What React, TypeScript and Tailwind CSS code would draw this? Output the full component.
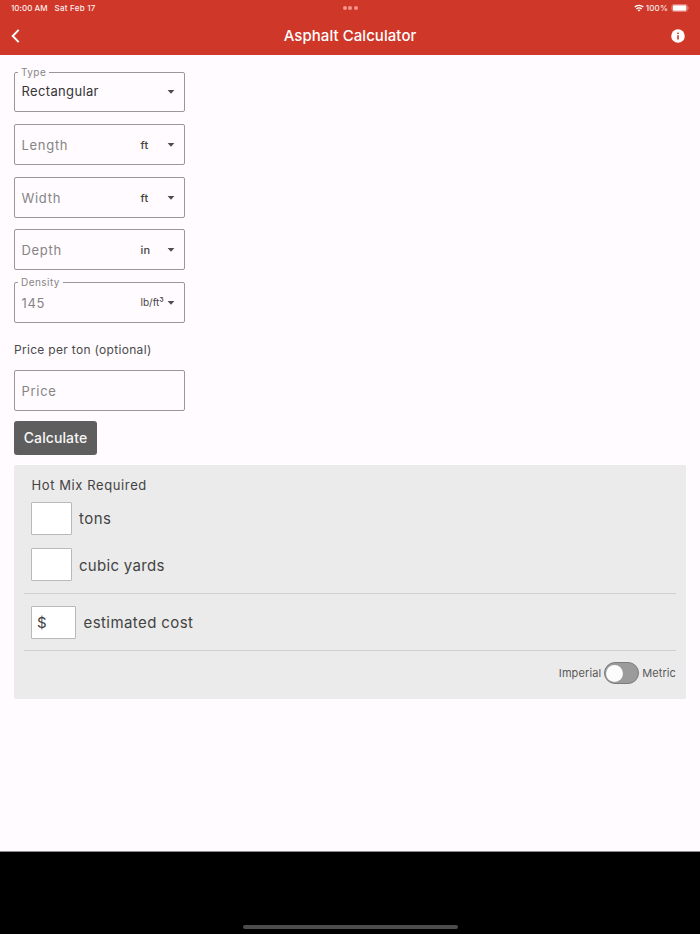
import { useState } from 'react';

type FieldProps = {
  label?: string;
  value: string;
  valueClass?: string;
  unit?: string;
  unitClass?: string;
  hasMenu?: boolean;
  className?: string;
};

function Caret() {
  return (
    <svg width="8" height="4" viewBox="0 0 8 4" className="shrink-0">
      <path d="M0.6 0h6.8L4 3.8z" fill="#4d4d4f" />
    </svg>
  );
}

function Field({
  label,
  value,
  valueClass = 'text-[#858585] tracking-[0.7px]',
  unit,
  unitClass = 'pt-px text-[11px] font-medium tracking-[0.2px]',
  hasMenu = true,
  className = 'h-[41px]',
}: FieldProps) {
  return (
    <div
      className={`relative flex w-[171px] items-center rounded-[2px] border border-[#989898] pl-[6.5px] pr-[9px] ${className}`}
    >
      {label && (
        <span className="absolute -top-[7px] left-[3px] bg-[#fffbff] px-[3px] text-[10px] leading-[12px] tracking-[0.45px] text-[#858585]">
          {label}
        </span>
      )}
      <span className={`flex-1 text-[13px] leading-4 ${valueClass}`}>{value}</span>
      {unit && <span className={`w-[26.5px] whitespace-nowrap text-[#444444] ${unitClass}`}>{unit}</span>}
      {hasMenu && <Caret />}
    </div>
  );
}

function StatusBar() {
  return (
    <div className="grid h-[17px] grid-cols-3 items-center px-[11px] text-[8px] font-medium leading-none text-[#fdeeec]">
      <div className="flex gap-[7px] pb-px">
        <span className="tracking-[0.02px]">10:00 AM</span>
        <span className="tracking-[0.25px]">Sat Feb 17</span>
      </div>
      <div className="flex justify-center gap-[1.5px] pb-px">
        <i className="size-[4px] rounded-full bg-[#f5958b]" />
        <i className="size-[4px] rounded-full bg-[#f5958b]" />
        <i className="size-[4px] rounded-full bg-[#f5958b]" />
      </div>
      <div className="flex items-center justify-end pb-px">
        <svg width="10" height="8" viewBox="0 0 10 8" fill="none" stroke="#fff" strokeWidth="1.4">
          <path d="M0.7 3.1a6.1 6.1 0 0 1 8.6 0" />
          <path d="M2.4 5a3.7 3.7 0 0 1 5.2 0" />
          <path d="M5 7.6L3.6 6.2a2 2 0 0 1 2.8 0z" fill="#fff" stroke="none" />
        </svg>
        <span className="ml-[2px] tracking-[0.15px]">100%</span>
        <svg width="18" height="8" viewBox="0 0 18 8" className="ml-[3px]">
          <rect x="0.9" y="0.4" width="15.4" height="7.2" rx="2.2" fill="none" stroke="#ec948c" strokeWidth="0.8" />
          <rect x="1.8" y="1.3" width="13.6" height="5.4" rx="1.3" fill="#fff" />
          <path d="M17 2.8v2.4c.9-.3.9-2.1 0-2.4z" fill="#ec948c" />
        </svg>
      </div>
    </div>
  );
}

function Header() {
  return (
    <header className="h-[55px] bg-[#cf3729]">
      <StatusBar />
      <div className="grid h-[38px] grid-cols-3 items-center px-[11px] text-white">
        <svg width="9" height="14" viewBox="0 0 9 14" fill="none" stroke="#fff" strokeWidth="2">
          <path d="M7.7 0.9L1.7 7l6 6.1" />
        </svg>
        <h1 className="whitespace-nowrap text-center text-[15px] font-medium leading-5 tracking-[0.06px]">
          Asphalt Calculator
        </h1>
        <svg width="14" height="14" viewBox="0 0 14 14" className="mr-[4px] justify-self-end">
          <circle cx="7" cy="7" r="6.8" fill="#fff" />
          <path d="M6.2 3.4h1.6V5H6.2zM6.2 6.2h1.6v4.4H6.2z" fill="#cf3729" />
        </svg>
      </div>
    </header>
  );
}

function Results() {
  const [metric, setMetric] = useState(false);

  return (
    <section className="mt-[10px] h-[234px] w-[672px] rounded-[2px] bg-[#ebebeb] px-[10px] pt-[11px] text-[#434343]">
      <h2 className="pl-[7.5px] text-[13px] leading-[18px] tracking-[0.6px]">Hot Mix Required</h2>
      <div className="mt-[8px] flex h-[33px] items-center pl-[7px]">
        <div className="h-[33px] w-[41px] rounded-[1px] border border-[#b9b9b9] bg-white" />
        <span className="ml-[7px] pt-[2px] text-[15px] tracking-[0.5px]">tons</span>
      </div>
      <div className="mt-[13px] flex h-[33px] items-center pl-[7px]">
        <div className="h-[33px] w-[41px] rounded-[1px] border border-[#b9b9b9] bg-white" />
        <span className="ml-[7px] pt-[3px] text-[15px] tracking-[0.3px]">cubic yards</span>
      </div>
      <div className="mt-[12px] flex h-[58px] items-center border-y border-[#d0d0d0] pl-[7px]">
        <div className="flex h-[33px] w-[45px] items-center rounded-[1px] border border-[#b9b9b9] bg-white pl-[5px] pt-[2px] text-[15px]">
          $
        </div>
        <span className="ml-[7.5px] pt-[2px] text-[15px] tracking-[0.42px]">estimated cost</span>
      </div>
      <div className="mt-[11px] flex h-[22px] items-center justify-end text-[11px] text-[#595959]">
        <span className="tracking-[0.1px]">Imperial</span>
        <button
          type="button"
          onClick={() => setMetric(!metric)}
          className={`ml-[3px] mr-[3px] flex h-[22px] w-[35px] items-center rounded-full border border-[#7b7b7b] bg-[#9b9b9b] px-[1px] ${metric ? 'justify-end' : ''}`}
        >
          <i className="size-[17px] rounded-full bg-[#fcfcfc]" />
        </button>
        <span className="tracking-[0.1px]">Metric</span>
      </div>
    </section>
  );
}

export default function App() {
  return (
    <div className="flex h-[934px] w-[700px] flex-col overflow-hidden bg-[#fffbff] font-['Inter',sans-serif]">
      <Header />
      <main className="flex-1 px-[14px] pt-[17px]">
        <Field label="Type" value="Rectangular" valueClass="pb-[2px] text-[#353535] tracking-[0.35px]" className="h-[40px]" />
        <Field value="Length" unit="ft" className="mt-[12px] h-[41px]" />
        <Field value="Width" unit="ft" className="mt-[12px] h-[41px]" />
        <Field value="Depth" unit="in" className="mt-[11px] h-[41px]" />
        <Field label="Density" value="145" unit="lb/ft³" unitClass="text-[10px]" className="mt-[12px] h-[41px]" />
        <p className="mt-[18px] text-[12px] leading-[18px] tracking-[0.31px] text-[#4a4a4a]">Price per ton (optional)</p>
        <Field value="Price" hasMenu={false} className="mt-[11px] h-[41px]" />
        <button
          type="button"
          className="mt-[10px] block h-[34px] w-[83px] rounded-[3px] bg-[#5e5e5e] pb-[2px] text-[14px] font-medium tracking-[0.1px] text-[#f7f7f7]"
        >
          Calculate
        </button>
        <Results />
      </main>
      <footer className="flex h-[83px] items-end justify-center border-t border-[#8e8c8e] bg-black pb-[5px]">
        <div className="h-[4px] w-[215px] rounded-full bg-[#4c4c4c]" />
      </footer>
    </div>
  );
}
